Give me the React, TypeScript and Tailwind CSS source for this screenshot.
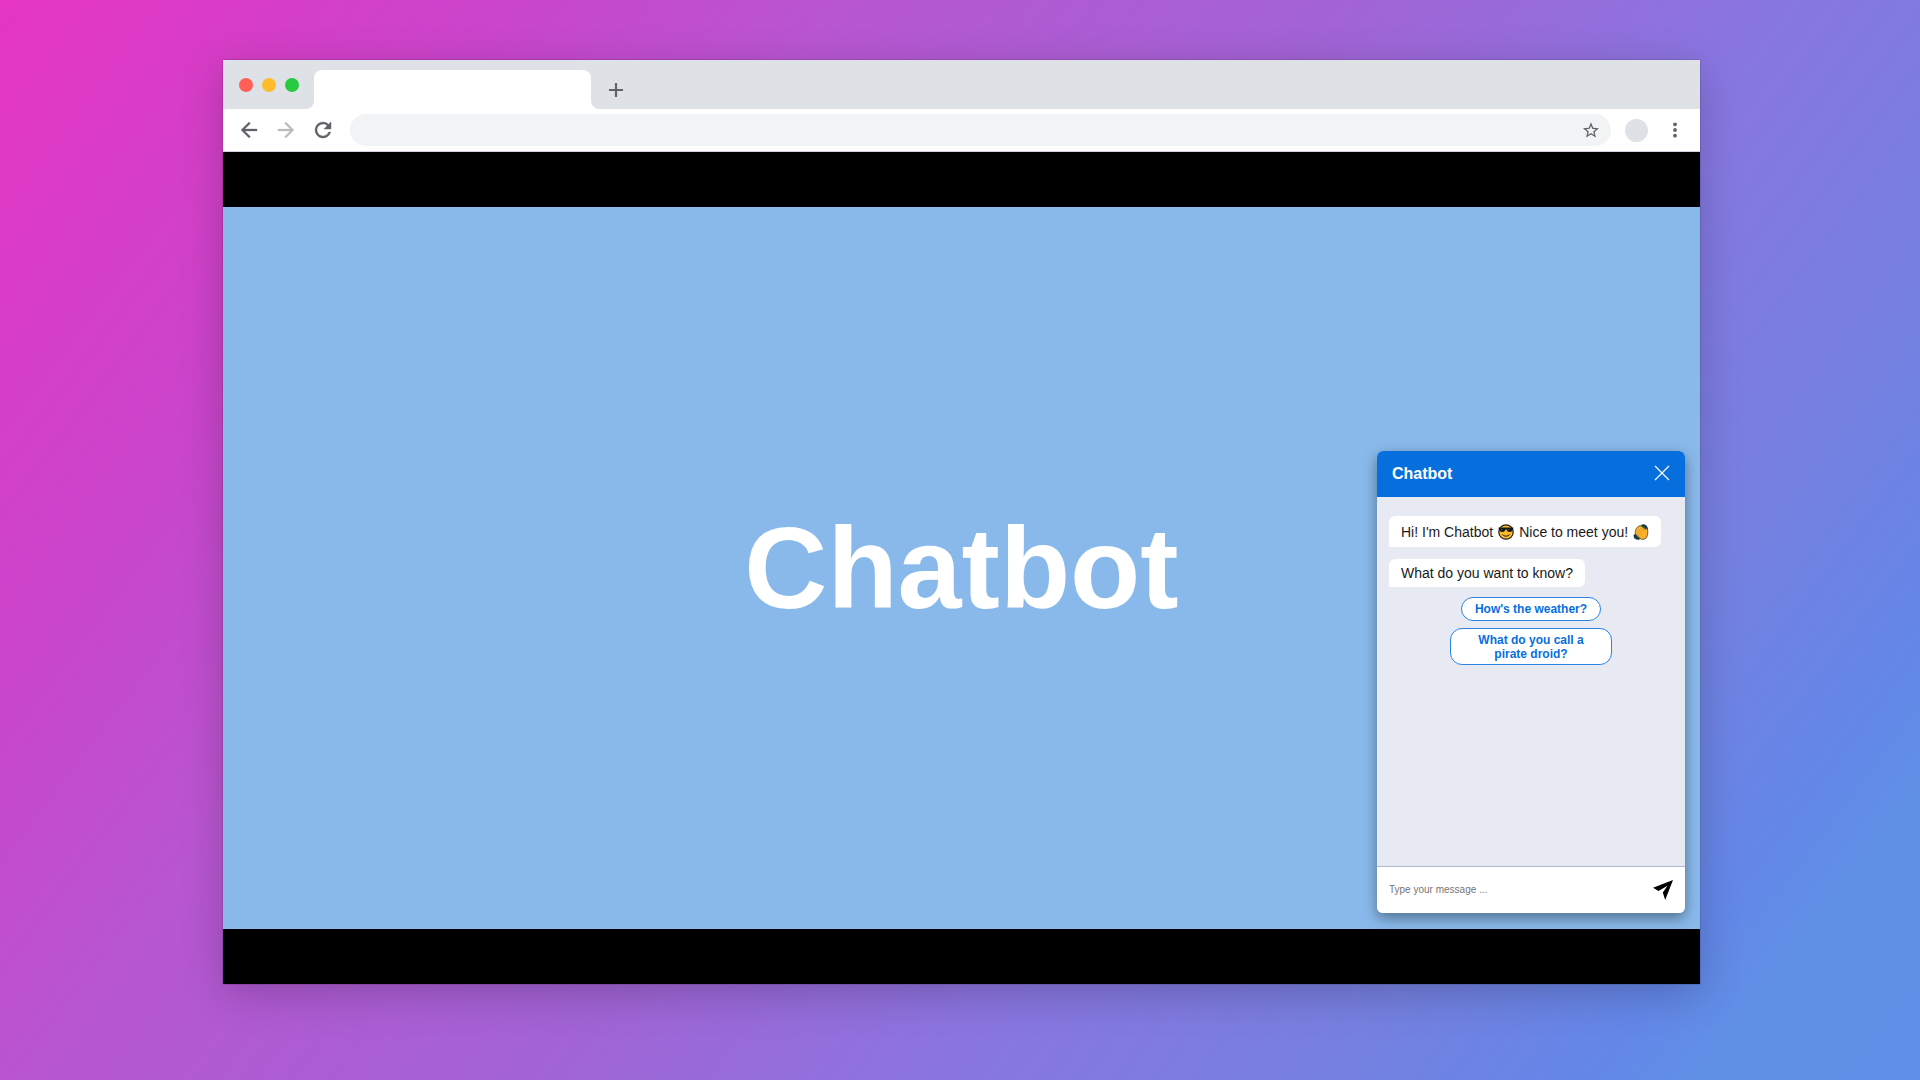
import React from "react";

function EmojiCool() {
  return (
    <svg viewBox="0 0 16 16" className="h-4 w-4 shrink-0" role="img" aria-label="Smiling face with sunglasses">
      <circle cx="8" cy="8" r="7.2" fill="#fdb92a" stroke="#1c1c1c" strokeWidth="1.2" />
      <path d="M.6 3.600h14.800v1.200l-.8.300c0 2.200-.9 3-2.900 3S8.900 7.200 8.600 5.600H7.400C7.100 7.200 6.400 8.100 4.300 8.100S1.400 7.300 1.400 5.100L.6 4.800z" fill="#15171a" />
      <path d="M3 5h1.300l-1 1.600zM10 5h1.300l-1 1.600z" fill="#59626b" />
      <path d="M4.600 10.800c1.800 1.900 5 1.900 6.800 0" fill="none" stroke="#1c1c1c" strokeWidth="1" strokeLinecap="round" />
    </svg>
  );
}

function EmojiWave() {
  return (
    <svg viewBox="0 0 16 16" className="h-4 w-4 shrink-0" role="img" aria-label="Waving hand">
      <path d="M9.500 2c2-.4 3.600.8 3.900 3" fill="none" stroke="#12404a" strokeWidth="3.200" strokeLinecap="round" />
      <path d="M2.200 11.500c0 1.900 1.100 2.700 3.300 2.700" fill="none" stroke="#12404a" strokeWidth="3.200" strokeLinecap="round" />
      <path
        d="M2.500 6.500C3.200 4 5 2 7 1.800c1.500-.1 2.600.8 3.600 2.200l1.200 1.500c.4-1 1.400-1.400 2.100-.9.800.6.900 1.800.9 3.200 0 3-.5 5-1.900 6.400-1.700 1.600-4.500 1.500-6.200.2L3 10.400C1.900 9.300 2.100 8 2.500 6.500z"
        fill="#fbb02c"
        stroke="#3a2f1a"
        strokeWidth=".7"
      />
      <path d="M4 7.500l3 3M5.500 5.500L9 9M7.500 4l3 3" stroke="#c98a1c" strokeWidth=".6" />
    </svg>
  );
}

function TabStrip() {
  return (
    <div className="flex h-[49px] items-end bg-[#dee1e6]">
      <div className="flex gap-[9px] self-start pt-[18px] pl-4">
        <button aria-label="Close window" className="h-3.5 w-3.5 rounded-full bg-[#ff5f57]" />
        <button aria-label="Minimize window" className="h-3.5 w-3.5 rounded-full bg-[#ffbd2e]" />
        <button aria-label="Maximize window" className="h-3.5 w-3.5 rounded-full bg-[#28ca42]" />
      </div>
      <div className="ml-[7px] h-2 w-2 bg-white">
        <div className="h-2 w-2 rounded-br-lg bg-[#dee1e6]" />
      </div>
      <div className="h-[39px] w-[277px] rounded-t-lg bg-white" />
      <div className="h-2 w-2 bg-white">
        <div className="h-2 w-2 rounded-bl-lg bg-[#dee1e6]" />
      </div>
      <button aria-label="New tab" className="mb-3 ml-[10px]">
        <svg viewBox="0 0 14 14" className="h-3.5 w-3.5" stroke="#5f6368" strokeWidth="2.200">
          <path d="M7 0v14M0 7h14" />
        </svg>
      </button>
    </div>
  );
}

function Toolbar() {
  return (
    <div className="flex h-[43px] items-center border-b border-[#d8cfe0] bg-white pl-[14px]">
      <button aria-label="Back">
        <svg viewBox="0 0 24 24" className="h-6 w-6" fill="#5f6368" stroke="#5f6368" strokeWidth=".3">
          <path d="M20 11H7.830l5.590-5.590L12 4l-8 8 8 8 1.410-1.410L7.830 13H20z" />
        </svg>
      </button>
      <button aria-label="Forward" className="ml-[13px]">
        <svg viewBox="0 0 24 24" className="h-6 w-6" fill="#babcbe" stroke="#babcbe" strokeWidth=".3">
          <path d="M12 4l-1.410 1.410L16.170 11H4v2h12.170l-5.580 5.590L12 20l8-8z" />
        </svg>
      </button>
      <button aria-label="Reload" className="ml-[13px]">
        <svg viewBox="0 0 24 24" className="h-6 w-6" fill="#5f6368" stroke="#5f6368" strokeWidth=".4">
          <path d="M17.650 6.350A7.958 7.958 0 0 0 12 4a8 8 0 1 0 7.730 10h-2.080A6 6 0 1 1 12 6c1.660 0 3.140.69 4.220 1.780L13 11h7V4z" />
        </svg>
      </button>
      <div className="ml-[15px] flex h-8 flex-1 items-center rounded-full bg-[#f1f3f4] pr-3">
        <input aria-label="Address" className="h-full min-w-0 flex-1 bg-transparent px-4 outline-none" />
        <button aria-label="Bookmark">
          <svg viewBox="0 0 24 24" className="h-4 w-4 overflow-visible" fill="#5f6368">
            <path d="M24 9.240l-8.628-.744L12 .55 8.628 8.508 0 9.240l6.552 5.676L4.584 23.350 12 18.874l7.416 4.476-1.956-8.434zM12 16.630l-4.512 2.724 1.200-5.136-3.984-3.456 5.256-.456L12 5.470l2.052 4.848 5.256.456-3.984 3.456 1.200 5.136z" />
          </svg>
        </button>
      </div>
      <button aria-label="Profile" className="ml-[14px] h-[23px] w-[23px] rounded-full bg-[#dee1e6]" />
      <button aria-label="Menu" className="mr-[15px] ml-[17px]">
        <svg viewBox="0 0 20 20" className="h-5 w-5" fill="#5f6368">
          <circle cx="10" cy="4.300" r="1.900" />
          <circle cx="10" cy="10" r="1.900" />
          <circle cx="10" cy="15.700" r="1.900" />
        </svg>
      </button>
    </div>
  );
}

function ChatWidget() {
  return (
    <section
      aria-label="Chatbot"
      className="absolute right-[15px] bottom-[16px] flex h-[462px] w-[308px] flex-col overflow-hidden rounded-md bg-white shadow-[0_5px_14px_rgba(0,0,0,0.4)]"
    >
      <header className="flex h-[46px] items-center justify-between bg-[#066fdd] px-[15px] text-white">
        <h2 className="text-base leading-5 font-bold">Chatbot</h2>
        <button aria-label="Close chat" className="pb-0.5">
          <svg viewBox="0 0 16 16" className="h-4 w-4" stroke="#fff" strokeWidth="1.200">
            <path d="M1 1l14 14M15 1L1 15" />
          </svg>
        </button>
      </header>
      <div className="flex flex-1 flex-col items-start bg-[#e7eaf3] px-3 pt-[19px] text-sm leading-5 text-[#1a1a1a]">
        <p className="flex h-[31px] items-center gap-[5px] rounded-md rounded-bl-none bg-white px-3 whitespace-nowrap">
          <span>Hi! I'm Chatbot</span>
          <EmojiCool />
          <span>Nice to meet you!</span>
          <EmojiWave />
        </p>
        <p className="mt-3 flex h-7 items-center rounded-md rounded-bl-none bg-white px-3 whitespace-nowrap">
          What do you want to know?
        </p>
        <div className="mt-2.5 flex flex-col items-center gap-[7px] self-center text-xs leading-[14px] font-bold text-[#066fdd]">
          <button className="h-6 rounded-full border border-[#2a84e2] bg-white px-[13px]">How's the weather?</button>
          <button className="h-[37px] w-[162px] rounded-xl border border-[#2a84e2] bg-white px-6">
            What do you call a pirate droid?
          </button>
        </div>
      </div>
      <form
        className="flex h-[47px] items-center border-t border-[#adbccb] bg-white px-3"
        onSubmit={(e: React.FormEvent) => e.preventDefault()}
      >
        <input
          aria-label="Message"
          placeholder="Type your message ..."
          className="min-w-0 flex-1 text-[10px] leading-4 outline-none placeholder:text-[#757575]"
        />
        <button aria-label="Send">
          <svg viewBox="0 0 20 20" className="h-5 w-5">
            <path d="M20 0L0 7.700l5.500 3.300L14.500 5.800 9.800 12.500l2.400 7.500z" fill="#000" />
          </svg>
        </button>
      </form>
    </section>
  );
}

export default function App() {
  return (
    <div className="min-h-screen bg-[linear-gradient(127deg,#e535c4_0%,#c945cb_19%,#b856d1_31%,#a164d6_50%,#8876e0_65%,#7680e0_78%,#6387e8_88%,#6090e6_92%,#5f8fe6_100%)] pt-[60px] pr-[220px] pb-24 pl-[223px] font-['Liberation_Sans',Arial,sans-serif]">
      <div className="flex h-[924px] flex-col shadow-[0_10px_40px_rgba(0,0,0,0.2),0_0_1px_rgba(0,0,0,0.6)]">
        <TabStrip />
        <Toolbar />
        <main className="flex flex-1 flex-col bg-black py-[55px]">
          <div className="relative flex flex-1 items-center justify-center bg-[#89b9eb]">
            <h1 className="text-[115px] leading-none font-bold text-white">Chatbot</h1>
            <ChatWidget />
          </div>
        </main>
      </div>
    </div>
  );
}
